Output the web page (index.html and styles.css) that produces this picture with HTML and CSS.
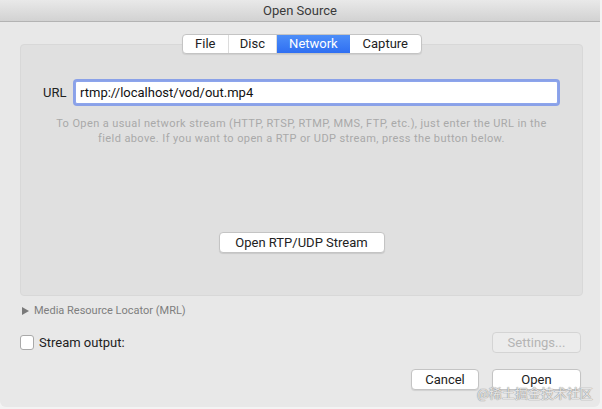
FILE: index.html
```html
<!DOCTYPE html>
<html lang="en">
  <head>
    <meta charset="UTF-8" />
    <meta name="viewport" content="width=device-width, initial-scale=1.0" />
    <title>Open Source</title>
    <link rel="stylesheet" href="styles.css">
  </head>
  <body>
    <div class="window">
      <div class="titlebar">Open Source</div>
      <div class="content">
        <div class="tabs">
          <div class="tab tab-file">File</div>
          <div class="tab tab-disc">Disc</div>
          <div class="tab tab-network selected">Network</div>
          <div class="tab tab-capture">Capture</div>
        </div>
        <div class="panel">
          <div class="url-row">
            <label class="url-label">URL</label>
            <div class="url-input">rtmp://localhost/vod/out.mp4</div>
          </div>
          <p class="hint">To Open a usual network stream (HTTP, RTSP, RTMP, MMS, FTP, etc.), just enter the URL in the<br>field above. If you want to open a RTP or UDP stream, press the button below.</p>
          <div class="rtp-row">
            <div class="btn btn-rtp">Open RTP/UDP Stream</div>
          </div>
        </div>
        <div class="mrl">
          <span class="triangle"></span>
          <span>Media Resource Locator (MRL)</span>
        </div>
        <div class="stream-row">
          <div class="check-wrap">
            <span class="checkbox"></span>
            <span class="check-label">Stream output:</span>
          </div>
          <div class="btn btn-wide disabled">Settings...</div>
        </div>
        <div class="actions">
          <div class="btn btn-cancel">Cancel</div>
          <div class="btn btn-wide">Open</div>
        </div>
      </div>
      <div class="watermark">@稀土掘金技术社区</div>
    </div>
  </body>
</html>
```

FILE: styles.css
```css
html, body {
  margin: 0;
  padding: 0;
  background: #f3f3f3;
}
body {
  font-family: Roboto, "Liberation Sans", "Noto Sans CJK SC", sans-serif;
  font-size: 13px;
  color: #262626;
}
.window {
  position: relative;
  width: 600px;
  height: 407px;
  background: #e8e8e8;
  border-radius: 0 0 6px 6px;
  overflow: hidden;
}
.titlebar {
  height: 21px;
  line-height: 22px;
  text-align: center;
  font-size: 13px;
  color: #3a3a3a;
  background: linear-gradient(#e9e9e9, #d2d2d2);
  border-bottom: 1px solid #b3b3b3;
}
.content {
  padding: 0 19px 0 20px;
}

/* segmented tabs */
.tabs {
  position: relative;
  z-index: 1;
  display: flex;
  width: 240px;
  height: 20px;
  margin: 12px 0 0 162px;
  background: #fff;
  border: 1px solid #c4c4c4;
  border-radius: 4px;
  box-sizing: border-box;
  box-shadow: 0 1px 1px rgba(0, 0, 0, 0.08);
  overflow: hidden;
}
.tab {
  height: 18px;
  line-height: 18px;
  text-align: center;
  font-size: 13px;
  color: #222;
  border-right: 1px solid #dcdcdc;
}
.tab-file { width: 45px; }
.tab-disc { width: 48px; }
.tab-network { width: 73px; }
.tab-capture { width: 72px; border-right: none; }
.tab.selected {
  background: linear-gradient(#4d8ef8, #2f6ff2);
  color: #fff;
  border-right: none;
}

.panel {
  height: 250px;
  margin-top: -10px;
  width: 561px;
  background: #e0e0e0;
  border: 1px solid #d8d8d8;
  border-radius: 4px;
}
.url-row {
  display: flex;
  align-items: center;
  margin-top: 36px;
  padding-left: 22px;
}
.url-label {
  width: 32px;
  font-size: 13px;
  color: #222;
}
.url-input {
  width: 477px;
  height: 21px;
  line-height: 21px;
  padding-left: 4px;
  background: #fff;
  border: 1px solid #8da5ec;
  border-radius: 2px;
  box-shadow: 0 0 0 2px rgba(110, 140, 235, 0.75);
  font-size: 13px;
  color: #111;
}
.hint {
  margin: 12px 0 0;
  text-align: center;
  font-size: 11px;
  letter-spacing: 0.4px;
  line-height: 15px;
  color: #a9a9a9;
}
.rtp-row {
  display: flex;
  justify-content: center;
  margin-top: 86px;
}

.btn {
  height: 19px;
  line-height: 19px;
  text-align: center;
  font-size: 13px;
  color: #222;
  background: #fff;
  border: 1px solid #c4c4c4;
  border-radius: 4px;
  box-shadow: 0 1px 1px rgba(0, 0, 0, 0.1);
}
.btn-rtp {
  width: 164px;
}
.btn-wide {
  width: 87px;
}
.btn-cancel {
  width: 66px;
}
.btn.disabled {
  color: #b4b4b4;
  background: #ececec;
  border-color: #d4d4d4;
  box-shadow: none;
}

.mrl {
  display: flex;
  align-items: center;
  gap: 5px;
  margin-top: 8px;
  padding-left: 2px;
  font-size: 11px;
  color: #7e7e7e;
}
.triangle {
  width: 0;
  height: 0;
  border-top: 4px solid transparent;
  border-bottom: 4px solid transparent;
  border-left: 7px solid #7a7a7a;
}

.stream-row {
  display: flex;
  justify-content: space-between;
  align-items: center;
  margin-top: 15px;
}
.check-wrap {
  display: flex;
  align-items: center;
  gap: 5px;
}
.checkbox {
  width: 12px;
  height: 13px;
  background: #fff;
  border: 1px solid #a9a9a9;
  border-radius: 3px;
}
.check-label {
  font-size: 13px;
  color: #222;
}

.actions {
  display: flex;
  justify-content: flex-end;
  gap: 13px;
  margin-top: 16px;
}

.watermark {
  position: absolute;
  left: 477px;
  top: 383px;
  font-size: 13px;
  color: rgba(245, 245, 245, 0.85);
  text-shadow: 0 0 1px #8a8a8a, 0 0 1px #8a8a8a;
}
```
